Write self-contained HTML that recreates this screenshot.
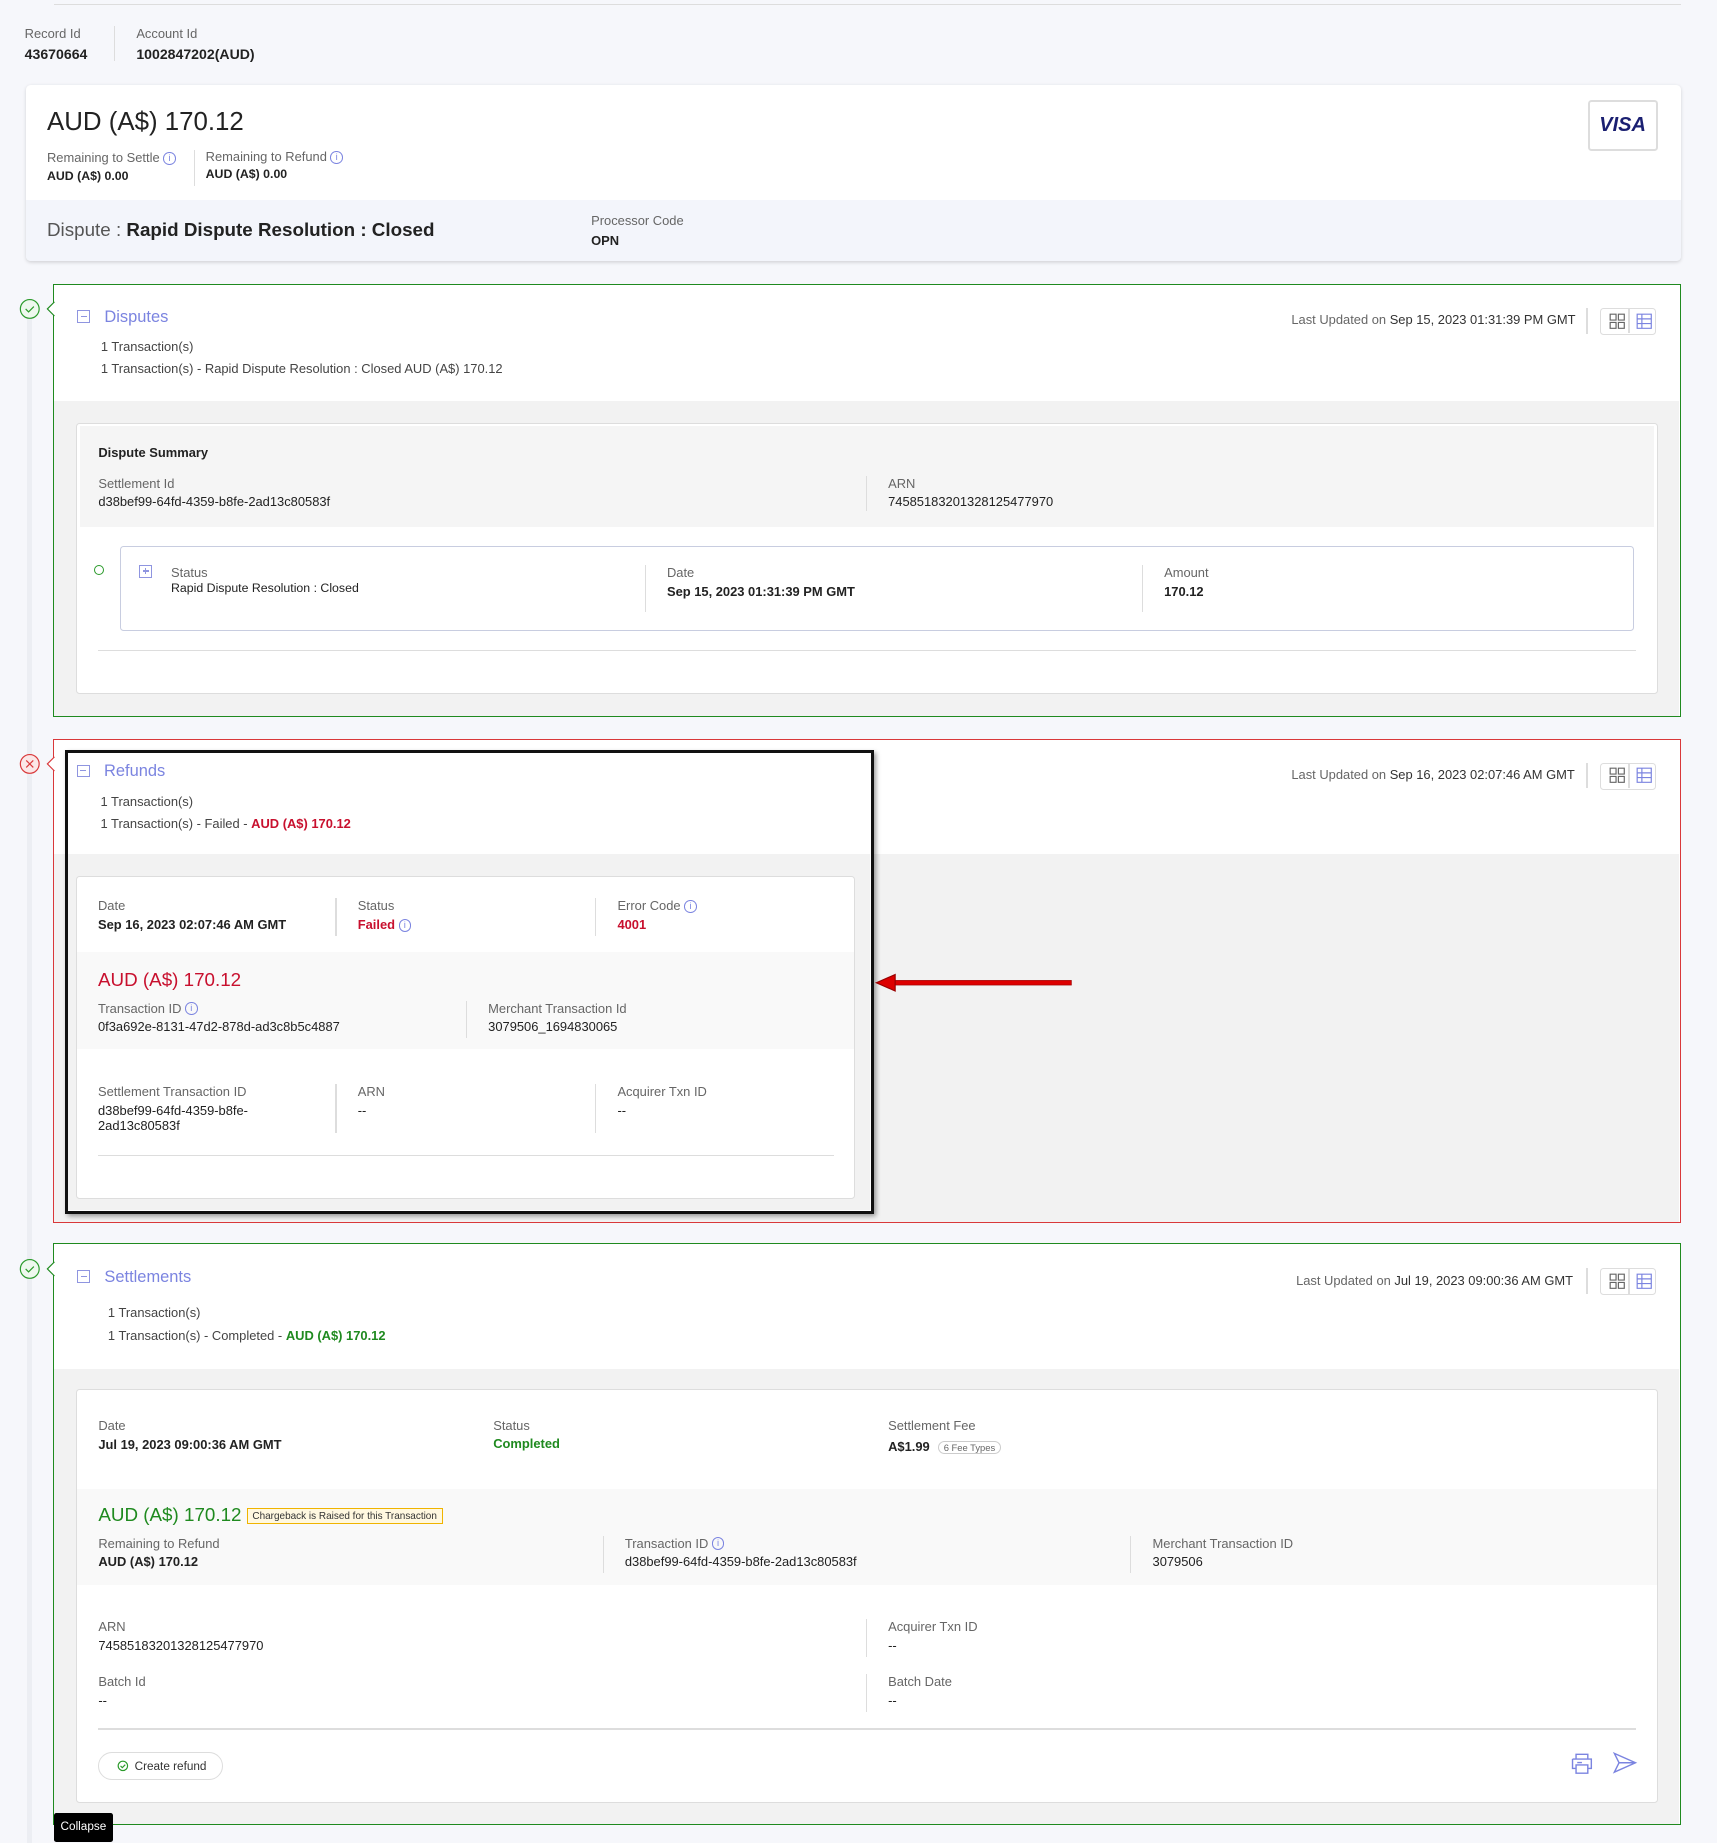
<!DOCTYPE html>
<html><head><meta charset="utf-8">
<style>
html,body{margin:0;padding:0}
body{width:1717px;height:1843px;background:#f6f7fb;overflow:hidden;font-family:"Liberation Sans",sans-serif;color:#222}
#z{zoom:1.17522;position:relative;width:1461px;height:1568px}
.a{position:absolute;white-space:nowrap}
.l{font-size:11px;color:#666}
.v{font-size:11px;color:#222;font-weight:600}
.vr{font-size:11px;color:#222}
.card{position:absolute;background:#fff;box-sizing:border-box}
.sep{position:absolute;width:1px;background:#ddd}
.i{display:inline-block;width:9px;height:9px;border:1px solid #7b84e0;border-radius:50%;font-size:8px;line-height:9px;text-align:center;color:#7b84e0;vertical-align:1px;margin-left:3px;font-weight:400}
.ttl{font-size:14px;color:#7b84e0}
.tog{position:absolute;width:11px;height:11px;border:1px solid #8f95e0;box-sizing:border-box}
.tog:after{content:"";position:absolute;left:2px;top:4px;width:5px;height:1px;background:#8f95e0}
.plus:before{content:"";position:absolute;left:4px;top:2px;width:1px;height:5px;background:#8f95e0}
.vb{position:absolute;width:47px;height:23px;border:1px solid #ddd;border-radius:3px;background:#fff;box-sizing:border-box}
.vb:after{content:"";position:absolute;left:23px;top:0;width:1px;height:21px;background:#ddd}
</style></head><body><div id="z">
<div class="a" style="left:46px;top:3px;width:1384px;height:1px;background:#ddd"></div>
<div class="a l" style="left:21px;top:22px">Record Id</div>
<div class="a v" style="left:21px;top:39px;font-size:12px">43670664</div>
<div class="sep" style="left:97px;top:22px;height:30px"></div>
<div class="a l" style="left:116px;top:22px">Account Id</div>
<div class="a v" style="left:116px;top:39px;font-size:12px">1002847202(AUD)</div>

<div class="card" style="left:22px;top:72px;width:1408px;height:150px;border-radius:4px;box-shadow:0 1px 3px rgba(0,0,0,.15)">
 <div class="a" style="left:18px;top:20px;font-size:22px;color:#222">AUD (A$) 170.12</div>
 <div class="a l" style="left:18px;top:56px">Remaining to Settle<span class="i">i</span></div>
 <div class="a v" style="left:18px;top:72px;font-size:10.5px">AUD (A$) 0.00</div>
 <div class="sep" style="left:143px;top:56px;height:30px"></div>
 <div class="a l" style="left:153px;top:55px">Remaining to Refund<span class="i">i</span></div>
 <div class="a v" style="left:153px;top:70px;font-size:10.5px">AUD (A$) 0.00</div>
 <div class="a" style="left:1329px;top:13px;width:56px;height:40px;border:2px solid #ddd;border-radius:3px;font:italic 900 17px 'Liberation Sans',sans-serif;color:#1a1f71;text-align:center;line-height:40px">VISA</div>
 <div class="a" style="left:0;top:98px;width:1408px;height:52px;background:#f3f5fb;border-radius:0 0 4px 4px"></div>
 <div class="a" style="left:18px;top:114px;font-size:16px;color:#555">Dispute : <span style="color:#222;font-weight:600">Rapid Dispute Resolution : Closed</span></div>
 <div class="a l" style="left:481px;top:109px">Processor Code</div>
 <div class="a v" style="left:481px;top:126px">OPN</div>
</div>

<div class="a" style="left:23px;top:260px;width:4px;height:1308px;background:#eceef3"></div>

<div class="card" style="left:45px;top:242px;width:1385px;height:368px;border:1px solid #1f8a1f">
 <div class="a" style="left:0;top:98px;width:1383px;height:268px;background:#f2f2f2"></div>
 <div class="tog" style="left:20px;top:21px"></div>
 <div class="a ttl" style="left:43px;top:19px">Disputes</div>
 <div class="a l" style="left:40px;top:46px;color:#444">1 Transaction(s)</div>
 <div class="a l" style="left:40px;top:64px;color:#444">1 Transaction(s)  - Rapid Dispute Resolution : Closed  AUD (A$) 170.12</div>
 <div class="a l" style="left:1053px;top:23px">Last Updated on <span style="color:#333">Sep 15, 2023 01:31:39 PM GMT</span></div>
 <div class="sep" style="left:1304px;top:19px;height:22px"></div>
 <div class="vb" style="left:1316px;top:19px"></div>
 <div class="card" style="left:19px;top:117px;width:1346px;height:231px;border:1px solid #ddd;border-radius:3px">
  <div class="a" style="left:2px;top:2px;width:1340px;height:86px;background:#f5f5f5"></div>
  <div class="a v" style="left:18px;top:18px">Dispute Summary</div>
  <div class="a l" style="left:18px;top:44px">Settlement Id</div>
  <div class="a vr" style="left:18px;top:60px">d38bef99-64fd-4359-b8fe-2ad13c80583f</div>
  <div class="sep" style="left:671px;top:44px;height:30px"></div>
  <div class="a l" style="left:690px;top:44px">ARN</div>
  <div class="a vr" style="left:690px;top:60px">74585183201328125477970</div>
  <div class="a" style="left:14px;top:120px;width:7px;height:7px;border:1px solid #2a9a2a;border-radius:50%"></div>
  <div class="a" style="left:36px;top:104px;width:1289px;height:72px;border:1px solid #c8cde0;border-radius:3px;box-sizing:border-box">
   <div class="tog plus" style="left:16px;top:15px"></div>
   <div class="a l" style="left:43px;top:15px">Status</div>
   <div class="a vr" style="left:43px;top:29px;font-size:10.5px">Rapid Dispute Resolution : Closed</div>
   <div class="sep" style="left:446px;top:15px;height:40px"></div>
   <div class="a l" style="left:465px;top:15px">Date</div>
   <div class="a v" style="left:465px;top:31px">Sep 15, 2023 01:31:39 PM GMT</div>
   <div class="sep" style="left:869px;top:15px;height:40px"></div>
   <div class="a l" style="left:888px;top:15px">Amount</div>
   <div class="a v" style="left:888px;top:31px">170.12</div>
  </div>
  <div class="a" style="left:18px;top:192px;width:1308px;height:1px;background:#ddd"></div>
 </div>
</div>
<svg class="a" style="left:15px;top:252px" width="32" height="22"><circle cx="10" cy="11" r="8" fill="#eef8ee" stroke="#2a9a2a"/><path d="M6.5 11l2.5 2.5 4.5-4.5" stroke="#2a9a2a" fill="none"/><path d="M31 5l-6 6 6 6" stroke="#1f8a1f" fill="#fff"/></svg>

<div class="card" style="left:45px;top:629px;width:1385px;height:412px;border:1px solid #d9383a">
 <div class="a" style="left:0;top:97px;width:1383px;height:313px;background:#f2f2f2"></div>
 <div class="a l" style="left:1053px;top:23px">Last Updated on <span style="color:#333">Sep 16, 2023 02:07:46 AM GMT</span></div>
 <div class="sep" style="left:1304px;top:19px;height:22px"></div>
 <div class="vb" style="left:1316px;top:19px"></div>
</div>
<svg class="a" style="left:15px;top:639px" width="32" height="22"><circle cx="10" cy="11" r="8" fill="#fbe7e7" stroke="#d9383a"/><path d="M7 8l6 6M13 8l-6 6" stroke="#d9383a"/><path d="M31 5l-6 6 6 6" stroke="#d9383a" fill="#fff"/></svg>
<div class="a" style="left:55px;top:638px;width:689px;height:395px;border:3px solid #111;box-sizing:border-box;box-shadow:2px 2px 4px rgba(0,0,0,.4);background:#fff">
 <div class="a" style="left:0;top:86px;width:683px;height:303px;background:#f2f2f2"></div>
 <div class="tog" style="left:8px;top:10px"></div>
 <div class="a ttl" style="left:31px;top:8px">Refunds</div>
 <div class="a l" style="left:28px;top:35px;color:#444">1 Transaction(s)</div>
 <div class="a l" style="left:28px;top:54px;color:#444">1 Transaction(s) - Failed - <span style="color:#c8102e;font-weight:600">AUD (A$) 170.12</span></div>
 <div class="card" style="left:7px;top:105px;width:663px;height:275px;border:1px solid #ddd;border-radius:3px">
  <div class="a l" style="left:18px;top:18px">Date</div>
  <div class="a v" style="left:18px;top:34px">Sep 16, 2023 02:07:46 AM GMT</div>
  <div class="sep" style="left:220px;top:18px;height:32px"></div>
  <div class="a l" style="left:239px;top:18px">Status</div>
  <div class="a v" style="left:239px;top:34px;color:#c8102e">Failed<span class="i">i</span></div>
  <div class="sep" style="left:441px;top:18px;height:32px"></div>
  <div class="a l" style="left:460px;top:18px">Error Code<span class="i">i</span></div>
  <div class="a v" style="left:460px;top:34px;color:#c8102e">4001</div>
  <div class="a" style="left:0;top:64px;width:661px;height:82px;background:#f9f9f9"></div>
  <div class="a" style="left:18px;top:78px;font-size:16px;color:#c8102e">AUD (A$) 170.12</div>
  <div class="a l" style="left:18px;top:105px">Transaction ID<span class="i">i</span></div>
  <div class="a vr" style="left:18px;top:121px">0f3a692e-8131-47d2-878d-ad3c8b5c4887</div>
  <div class="sep" style="left:331px;top:105px;height:32px"></div>
  <div class="a l" style="left:350px;top:105px">Merchant Transaction Id</div>
  <div class="a vr" style="left:350px;top:121px">3079506_1694830065</div>
  <div class="a l" style="left:18px;top:176px">Settlement Transaction ID</div>
  <div class="a vr" style="left:18px;top:192px;line-height:13px">d38bef99-64fd-4359-b8fe-<br>2ad13c80583f</div>
  <div class="sep" style="left:220px;top:176px;height:42px"></div>
  <div class="a l" style="left:239px;top:176px">ARN</div>
  <div class="a vr" style="left:239px;top:192px">--</div>
  <div class="sep" style="left:441px;top:176px;height:42px"></div>
  <div class="a l" style="left:460px;top:176px">Acquirer Txn ID</div>
  <div class="a vr" style="left:460px;top:192px">--</div>
  <div class="a" style="left:18px;top:236px;width:626px;height:1px;background:#ddd"></div>
 </div>
</div>
<svg class="a" style="left:744px;top:826px" width="172" height="20"><path d="M16 8H168V12H16z" fill="#d00" stroke="#900" stroke-width=".5"/><path d="M2 10L18 3V17z" fill="#d00" stroke="#900"/></svg>

<div class="card" style="left:45px;top:1058px;width:1385px;height:495px;border:1px solid #1f8a1f">
 <div class="a" style="left:0;top:106px;width:1383px;height:387px;background:#f2f2f2"></div>
 <div class="tog" style="left:20px;top:22px"></div>
 <div class="a ttl" style="left:43px;top:20px">Settlements</div>
 <div class="a l" style="left:46px;top:52px;color:#444">1 Transaction(s)</div>
 <div class="a l" style="left:46px;top:71px;color:#444">1 Transaction(s) - Completed - <span style="color:#1f8a1f;font-weight:600">AUD (A$) 170.12</span></div>
 <div class="a l" style="left:1057px;top:24px">Last Updated on <span style="color:#333">Jul 19, 2023 09:00:36 AM GMT</span></div>
 <div class="sep" style="left:1304px;top:20px;height:22px"></div>
 <div class="vb" style="left:1316px;top:20px"></div>
 <div class="card" style="left:19px;top:123px;width:1346px;height:352px;border:1px solid #ddd;border-radius:3px">
  <div class="a l" style="left:18px;top:24px">Date</div>
  <div class="a v" style="left:18px;top:40px">Jul 19, 2023 09:00:36 AM GMT</div>
  <div class="a l" style="left:354px;top:24px">Status</div>
  <div class="a v" style="left:354px;top:39px;color:#1f8a1f">Completed</div>
  <div class="a l" style="left:690px;top:24px">Settlement Fee</div>
  <div class="a v" style="left:690px;top:42px">A$1.99 <span style="display:inline-block;border:1px solid #ccc;border-radius:8px;padding:0 4px;font-size:8px;color:#666;font-weight:400;margin-left:4px">6 Fee Types</span></div>
  <div class="a" style="left:0;top:84px;width:1344px;height:82px;background:#f9f9f9"></div>
  <div class="a" style="left:18px;top:97px;font-size:16px;color:#1f8a1f">AUD (A$) 170.12 <span style="display:inline-block;vertical-align:2px;border:1px solid #f0b400;background:#fff8e0;font-size:8.5px;color:#333;padding:1px 4px">Chargeback is Raised for this Transaction</span></div>
  <div class="a l" style="left:18px;top:124px">Remaining to Refund</div>
  <div class="a v" style="left:18px;top:140px">AUD (A$) 170.12</div>
  <div class="sep" style="left:447px;top:124px;height:32px"></div>
  <div class="a l" style="left:466px;top:124px">Transaction ID<span class="i">i</span></div>
  <div class="a vr" style="left:466px;top:140px">d38bef99-64fd-4359-b8fe-2ad13c80583f</div>
  <div class="sep" style="left:896px;top:124px;height:32px"></div>
  <div class="a l" style="left:915px;top:124px">Merchant Transaction ID</div>
  <div class="a vr" style="left:915px;top:140px">3079506</div>
  <div class="a l" style="left:18px;top:195px">ARN</div>
  <div class="a vr" style="left:18px;top:211px">74585183201328125477970</div>
  <div class="sep" style="left:671px;top:195px;height:32px"></div>
  <div class="a l" style="left:690px;top:195px">Acquirer Txn ID</div>
  <div class="a vr" style="left:690px;top:211px">--</div>
  <div class="a l" style="left:18px;top:242px">Batch Id</div>
  <div class="a vr" style="left:18px;top:258px">--</div>
  <div class="sep" style="left:671px;top:242px;height:32px"></div>
  <div class="a l" style="left:690px;top:242px">Batch Date</div>
  <div class="a vr" style="left:690px;top:258px">--</div>
  <div class="a" style="left:18px;top:288px;width:1308px;height:1px;background:#ddd"></div>
  <div class="a" style="left:18px;top:308px;width:106px;height:24px;border:1px solid #ddd;border-radius:12px;font-size:10px;color:#333;line-height:24px;box-sizing:border-box;padding-left:30px">Create refund</div>
  <svg class="a" style="left:34px;top:315px" width="10" height="10"><circle cx="5" cy="5" r="4" fill="none" stroke="#2a9a2a"/><path d="M3 5l1.5 1.5 2.5-2.5" stroke="#2a9a2a" fill="none"/></svg>
  <svg class="a" style="left:1269px;top:308px" width="22" height="20"><path d="M6 6V2h10v4M3 6h16v8h-3M6 14H3V6M6 11h10v7H6z M7 9h4" fill="none" stroke="#7b84e0" stroke-width="1.2"/></svg>
  <svg class="a" style="left:1306px;top:307px" width="22" height="22"><path d="M2 2L20 10 2 18 6 10z M6 10h14" fill="none" stroke="#7b84e0" stroke-width="1.2"/></svg>
 </div>
</div>
<svg class="a" style="left:15px;top:1069px" width="32" height="22"><circle cx="10" cy="11" r="8" fill="#eef8ee" stroke="#2a9a2a"/><path d="M6.5 11l2.5 2.5 4.5-4.5" stroke="#2a9a2a" fill="none"/><path d="M31 5l-6 6 6 6" stroke="#1f8a1f" fill="#fff"/></svg>

<svg class="a" style="left:1369px;top:266px" width="14" height="14"><path d="M1 1h5v5H1zM8 1h5v5H8zM1 8h5v5H1zM8 8h5v5H8z" fill="none" stroke="#666"/></svg>
<svg class="a" style="left:1392px;top:266px" width="14" height="14"><path d="M1 1h12v12H1zM1 5h12M1 9h12M5 1v12" fill="none" stroke="#7b84e0"/></svg>
<svg class="a" style="left:1369px;top:653px" width="14" height="14"><path d="M1 1h5v5H1zM8 1h5v5H8zM1 8h5v5H1zM8 8h5v5H8z" fill="none" stroke="#666"/></svg>
<svg class="a" style="left:1392px;top:653px" width="14" height="14"><path d="M1 1h12v12H1zM1 5h12M1 9h12M5 1v12" fill="none" stroke="#7b84e0"/></svg>
<svg class="a" style="left:1369px;top:1083px" width="14" height="14"><path d="M1 1h5v5H1zM8 1h5v5H8zM1 8h5v5H1zM8 8h5v5H8z" fill="none" stroke="#666"/></svg>
<svg class="a" style="left:1392px;top:1083px" width="14" height="14"><path d="M1 1h12v12H1zM1 5h12M1 9h12M5 1v12" fill="none" stroke="#7b84e0"/></svg>

<div class="a" style="left:46px;top:1543px;width:50px;height:24px;background:#000;color:#fff;font-size:10px;line-height:24px;text-align:center;border-radius:2px">Collapse</div>
</div></body></html>
